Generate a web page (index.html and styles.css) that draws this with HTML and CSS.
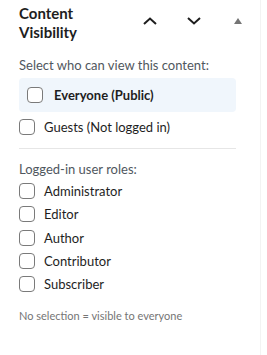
FILE: index.html
```html
<!DOCTYPE html>
<html>
<head>
<meta charset="utf-8">
<link rel="stylesheet" href="styles.css">
</head>
<body>
<div class="panel">
  <div class="header">
    <div class="title">Content Visibility</div>
    <button class="hbtn" aria-label="Move up">
      <svg width="16" height="10" viewBox="0 0 16 10"><path d="M2 8 L8 2.5 L14 8" fill="none" stroke="#1e1e1e" stroke-width="2"/></svg>
    </button>
    <button class="hbtn" aria-label="Move down">
      <svg width="16" height="10" viewBox="0 0 16 10"><path d="M2 2 L8 7.5 L14 2" fill="none" stroke="#1e1e1e" stroke-width="2"/></svg>
    </button>
    <button class="hbtn" aria-label="Toggle">
      <svg width="8" height="6" viewBox="0 0 8 6"><path d="M0 6 L4 0 L8 6 Z" fill="#757575"/></svg>
    </button>
  </div>
  <div class="body">
    <p class="hint">Select who can view this content:</p>
    <label class="row everyone"><span class="cb"></span><span class="lbl strong">Everyone (Public)</span></label>
    <label class="row guests"><span class="cb"></span><span class="lbl">Guests (Not logged in)</span></label>
    <hr class="divider">
    <p class="hint roles">Logged-in user roles:</p>
    <div class="list">
      <label class="row"><span class="cb"></span><span class="lbl">Administrator</span></label>
      <label class="row"><span class="cb"></span><span class="lbl">Editor</span></label>
      <label class="row"><span class="cb"></span><span class="lbl">Author</span></label>
      <label class="row"><span class="cb"></span><span class="lbl">Contributor</span></label>
      <label class="row"><span class="cb"></span><span class="lbl">Subscriber</span></label>
    </div>
    <p class="note">No selection = visible to everyone</p>
  </div>
</div>
</body>
</html>
```
FILE: styles.css
```css
* { box-sizing: border-box; }
html, body { margin: 0; padding: 0; background: #fff; }
body {
  font-family: "Lato", "Noto Sans", sans-serif;
  color: #1e1e1e;
}
.panel {
  width: 261px;
  height: 355px;
  border-right: 1px solid #f3f3f3;
}
.header {
  display: flex;
  align-items: flex-start;
  padding-left: 19px;
  height: 46px;
}
.title {
  flex: 0 0 109px;
  font-size: 15px;
  font-weight: 700;
  line-height: 19px;
  padding-top: 4px;
}
.hbtn {
  width: 44px;
  height: 40px;
  margin-top: 1px;
  border: 0;
  background: none;
  padding: 0;
  display: flex;
  align-items: center;
  justify-content: center;
}
.body {
  padding: 0 24px 0 19px;
}
.hint {
  margin: 0;
  font-size: 13px;
  line-height: 18px;
  color: #50575e;
  padding-top: 10px;
}
.row {
  display: flex;
  align-items: center;
  gap: 9px;
  font-size: 13px;
  line-height: 16px;
}
.cb {
  width: 16px;
  height: 16px;
  flex: none;
  border: 1.3px solid #7a7a7a;
  border-radius: 4px;
  background: #fff;
}
.everyone {
  margin-top: 4px;
  background: #f0f6fc;
  border-radius: 4px;
  padding: 9px 8px;
  gap: 11px;
}
.strong { font-weight: 700; }
.guests { margin-top: 7px; }
.divider {
  border: 0;
  border-top: 1px solid #e6e6e6;
  margin: 13px 0 0 0;
}
.roles { padding-top: 11px; }
.list {
  display: flex;
  flex-direction: column;
  gap: 7.3px;
  margin-top: 5px;
}
.note {
  margin: 17px 0 0 0;
  font-size: 11px;
  line-height: 14px;
  color: #757575;
}
```
